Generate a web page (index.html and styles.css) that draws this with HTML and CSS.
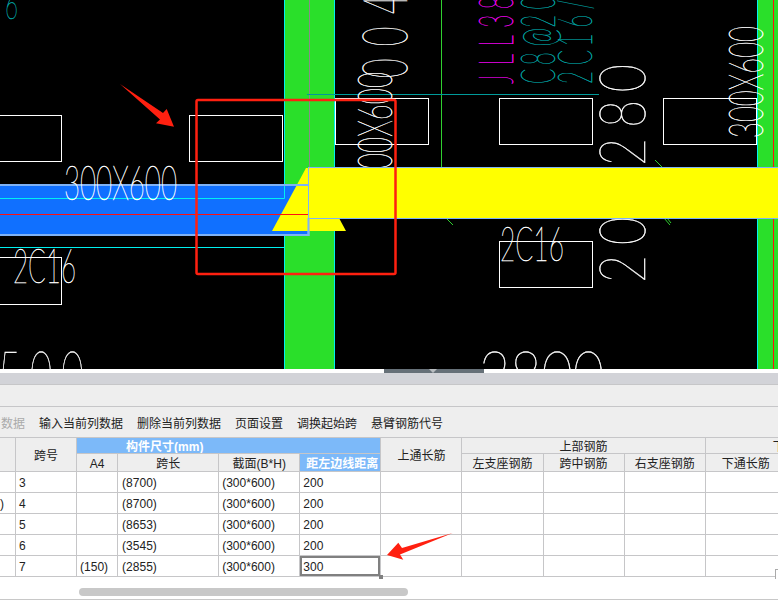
FILE: index.html
```html
<!DOCTYPE html>
<html lang="zh-CN">
<head>
    <meta charset="UTF-8">
    <title>梁平法表格</title>
    <link rel="stylesheet" href="styles.css">
</head>
<body>
    <div class="cad">
        <svg class="cad-svg" width="778" height="369" viewBox="0 0 778 369">
            <!-- columns -->
            <rect class="col" x="284" y="0" width="51" height="369"/>
            <rect class="col" x="757" y="0" width="21" height="369"/>
            <path class="line-cyan" d="M284.5 0V369M334.5 0V369M757.5 0V369"/>
            <path class="line-gray" d="M309.5 0V168"/>
            <path class="line-red" d="M773.5 0V369"/>
            <path class="line-green" d="M441.5 0V168M655 160L662 167M446 218L453 225M664 218L670 225M667 218L671 223"/>

            <!-- rebar boxes -->
            <rect class="box" x="-2" y="115.5" width="63.5" height="46"/>
            <rect class="box" x="189.5" y="115.5" width="93" height="46"/>
            <rect class="box" x="335.5" y="98.5" width="93" height="46"/>
            <rect class="box" x="499.5" y="98.5" width="93" height="46"/>
            <rect class="box" x="663.5" y="98.5" width="93" height="46"/>
            <rect class="box" x="499.5" y="241.5" width="93" height="46"/>
            <rect class="box" x="-2" y="257.5" width="63.5" height="47"/>
            <path class="line-teal" d="M307 94.5H599"/>

            <!-- notes -->
            <text class="cad-text teal" x="5" y="19" font-size="40" textLength="13" lengthAdjust="spacingAndGlyphs">6</text>
            <text class="cad-text" transform="translate(392,185) rotate(-90)" font-size="47" textLength="113" lengthAdjust="spacingAndGlyphs">300X600</text>
            <text class="cad-text" transform="translate(407,78) rotate(-90) scale(.54,1)" font-size="63" x="0 59 118">004</text>
            <text class="cad-text magenta" transform="translate(513,84) rotate(-90) scale(.48,1)" font-size="47" x="0 39 78 117 156">JLL38</text>
            <text class="cad-text teal" transform="translate(555,84) rotate(-90) scale(.48,1)" font-size="47" x="0 39 78 117 156">C8@20</text>
            <text class="cad-text teal" transform="translate(592,84) rotate(-90) scale(.48,1)" font-size="47" x="0 39 78 117 156">2C16/</text>
            <text class="cad-text" transform="translate(645,166) rotate(-90) scale(.76,1)" font-size="64" x="0 50 97">280</text>
            <text class="cad-text" transform="translate(645,283) rotate(-90) scale(.76,1)" font-size="64" x="0 50">20</text>
            <text class="cad-text" transform="translate(763,138) rotate(-90)" font-size="47" textLength="112" lengthAdjust="spacingAndGlyphs">300X600</text>
            <text class="cad-text" x="500" y="261" font-size="47" textLength="64" lengthAdjust="spacingAndGlyphs">2C16</text>
            <text class="cad-text" x="13" y="283" font-size="48" textLength="63" lengthAdjust="spacingAndGlyphs">2C16</text>
            <text class="cad-text" x="479" y="397" font-size="64" textLength="125" lengthAdjust="spacingAndGlyphs">2800</text>
            <text class="cad-text" transform="translate(0,397) scale(.6,1)" font-size="64" x="-3 50 102">500</text>

            <!-- beams -->
            <rect class="beam-blue" x="-2" y="185" width="310.5" height="50"/>
            <path class="line-cyan" d="M0 198.5H284.5V185M0 247.5H284.5"/>
            <text class="cad-text" x="64" y="200" font-size="48" textLength="113" lengthAdjust="spacingAndGlyphs">300X600</text>
            <polygon class="beam-yellow" points="272,231 306,168 309,168 309,231"/>
            <polygon class="beam-yellow" points="309,218 339,218 346,231 309,231"/>
            <path class="line-red" d="M0 214.5H309"/>
            <path class="line-edge" d="M270 185H309M270 235H308.5V218"/>
            <rect class="beam-yellow edge" x="308.5" y="167.5" width="472" height="51"/>

            <!-- markup -->
            <rect class="mark" x="196.5" y="100" width="199" height="174" rx="1.5"/>
            <polygon class="arrow" points="120,84 163,113 166.7,109 174,126.7 156,123.3 160,119.5"/>
        </svg>
    </div>

    <div class="splitter"><div class="splitter-handle"></div></div>
    <div class="band"></div>
    <div class="tools-blank"></div>

    <div class="toolbar">
        <span class="tool tool-off">数据</span>
        <span class="tool">输入当前列数据</span>
        <span class="tool">删除当前列数据</span>
        <span class="tool">页面设置</span>
        <span class="tool">调换起始跨</span>
        <span class="tool">悬臂钢筋代号</span>
    </div>

    <div class="grid-wrap">
        <table class="grid">
            <colgroup>
                <col class="w16"><col class="w61"><col class="w41"><col class="w101">
                <col class="w81"><col class="w81"><col class="w81"><col class="w81">
                <col class="w81"><col class="w81"><col class="w81"><col class="w81">
            </colgroup>
            <thead>
                <tr class="head-top">
                    <th rowspan="2"></th>
                    <th rowspan="2">跨号</th>
                    <th colspan="4" class="group-blue">构件尺寸(mm)</th>
                    <th rowspan="2">上通长筋</th>
                    <th colspan="3">上部钢筋</th>
                    <th colspan="2" class="group-low">下部钢筋</th>
                </tr>
                <tr class="head-sub">
                    <th>A4</th>
                    <th>跨长</th>
                    <th>截面(B*H)</th>
                    <th class="sel-head">距左边线距离</th>
                    <th>左支座钢筋</th>
                    <th>跨中钢筋</th>
                    <th>右支座钢筋</th>
                    <th>下通长筋</th>
                    <th></th>
                </tr>
            </thead>
            <tbody>
                <tr><td></td><td>3</td><td></td><td>(8700)</td><td>(300*600)</td><td>200</td><td></td><td></td><td></td><td></td><td></td><td></td></tr>
                <tr><td class="cut">)</td><td>4</td><td></td><td>(8700)</td><td>(300*600)</td><td>200</td><td></td><td></td><td></td><td></td><td></td><td></td></tr>
                <tr><td></td><td>5</td><td></td><td>(8653)</td><td>(300*600)</td><td>200</td><td></td><td></td><td></td><td></td><td></td><td></td></tr>
                <tr><td></td><td>6</td><td></td><td>(3545)</td><td>(300*600)</td><td>200</td><td></td><td></td><td></td><td></td><td></td><td></td></tr>
                <tr><td></td><td>7</td><td>(150)</td><td>(2855)</td><td>(300*600)</td><td class="sel-cell">300</td><td></td><td></td><td></td><td></td><td></td><td></td></tr>
            </tbody>
        </table>
        <div class="corner-box"></div>
        <svg class="arrow-layer" width="80" height="40" viewBox="380 528 80 40">
            <polygon class="arrow" points="452.7,533 402,548 398.3,542.7 387,555 403.3,559.7 400,554.5"/>
        </svg>
    </div>

    <div class="hscroll"><div class="hscroll-thumb"></div></div>
</body>
</html>
```

FILE: styles.css
```css
html, body {
    margin: 0;
    padding: 0;
}

body {
    width: 778px;
    height: 601px;
    overflow: hidden;
    background: #fff;
    color: #222;
    font-family: "Liberation Sans", "Noto Sans CJK SC", sans-serif;
    font-size: 12px;
    display: flex;
    flex-direction: column;
}

/* drawing */
.cad {
    height: 369px;
    flex: none;
    background: #000;
}

.cad-svg {
    display: block;
}

.col { fill: #2adf2a; }
.line-cyan { fill: none; stroke: #00f0f0; stroke-width: 1; }
.line-gray { fill: none; stroke: #8a8a8a; stroke-width: 1; }
.line-red { fill: none; stroke: #ff1010; stroke-width: 1; }
.line-green { fill: none; stroke: #2fd02f; stroke-width: 1; }
.line-teal { fill: none; stroke: #009a9a; stroke-width: 1; }
.line-edge { fill: none; stroke: #7fb2f5; stroke-width: 2; }
.box { fill: none; stroke: #fff; stroke-width: 1; }

.cad-text {
    font-family: "Lato", "DejaVu Sans", sans-serif;
    font-weight: 100;
    fill: #fff;
    stroke: #fff;
    stroke-width: 0.5;
}

.cad-text.teal { fill: #00a0a0; stroke: #00a0a0; }
.cad-text.magenta { fill: #f000f0; stroke: #f000f0; }

.beam-blue { fill: #1070ff; stroke: #7fb2f5; stroke-width: 2; }
.beam-yellow { fill: #ffff00; }
.beam-yellow.edge { stroke: #7fb2f5; stroke-width: 1; }
.mark { fill: none; stroke: #ff2010; stroke-width: 2.5; }
.arrow { fill: #ff2010; }

/* splitter and empty bars */
.splitter {
    height: 4px;
    flex: none;
    background: #fff;
}

.splitter-handle {
    width: 100px;
    height: 4px;
    margin-left: 384px;
    background: #667078;
    position: relative;
}

.splitter-handle::after {
    content: "";
    position: absolute;
    left: 45px;
    top: 0;
    border-left: 4px solid transparent;
    border-right: 4px solid transparent;
    border-top: 4px solid #b8bcc0;
}

.band {
    height: 12px;
    flex: none;
    background: #d2d3d8;
    border-bottom: 1px solid #c6c6c8;
    box-sizing: border-box;
}

.tools-blank {
    height: 22px;
    flex: none;
    background: #eee;
    border-bottom: 1px solid #c6c6c8;
    box-sizing: border-box;
}

.toolbar {
    height: 31px;
    flex: none;
    box-sizing: border-box;
    padding-left: 1px;
    background: #eee;
    border-bottom: 1px solid #c6c6c8;
    display: flex;
    align-items: center;
    gap: 14px;
    white-space: nowrap;
}

.tool-off {
    color: #aaa;
}

/* table */
.grid-wrap {
    height: 141px;
    flex: none;
    overflow: hidden;
    position: relative;
}

.grid {
    border-collapse: separate;
    border-spacing: 0;
    table-layout: fixed;
    width: 868px;
}

.w16 { width: 16px; }
.w61 { width: 61px; }
.w41 { width: 41px; }
.w101 { width: 101px; }
.w81 { width: 81px; }

.grid th,
.grid td {
    box-sizing: border-box;
    padding: 2px 0 0;
    border-right: 1px solid #c6c6c8;
    border-bottom: 1px solid #c6c6c8;
    overflow: hidden;
    white-space: nowrap;
    line-height: 13px;
}

.grid th {
    background: #eee;
    font-weight: normal;
    text-align: center;
}

.head-top th {
    height: 16px;
    padding-top: 3px;
    line-height: 12px;
}

.head-top th[rowspan] {
    padding-top: 4px;
    line-height: 13px;
}

.head-sub th {
    height: 18px;
    padding-top: 3px;
}

.grid .group-blue {
    background: #7cb9f9;
    color: #fff;
    font-weight: bold;
    text-align: left;
    padding-left: 49px;
}

.grid .group-low {
    text-align: left;
    padding-left: 67px;
}

.grid .sel-head {
    background: #7cb9f9;
    color: #fff;
    font-weight: bold;
    text-align: left;
    padding-left: 6px;
}

.grid td {
    height: 21px;
    padding-left: 3px;
}

.grid td:nth-child(4) { padding-left: 4px; }
.grid td.cut { padding-left: 0; }

.grid td.sel-cell {
    overflow: visible;
    position: relative;
    box-shadow: inset 0 0 0 2px #808080;
}

.sel-cell::after {
    content: "";
    position: absolute;
    right: -3px;
    bottom: -3px;
    width: 4px;
    height: 4px;
    background: #808080;
}

.corner-box {
    position: absolute;
    left: 775px;
    top: 131px;
    width: 10px;
    height: 16px;
    border: 1px solid #aaa;
    background: #fff;
}

.arrow-layer {
    position: absolute;
    left: 380px;
    top: 90px;
}

/* bottom scrollbar */
.hscroll {
    height: 21px;
    flex: none;
    box-sizing: border-box;
    background: #fff;
    padding-top: 9px;
    padding-left: 79px;
    border-bottom: 1px solid #c8c8c8;
}

.hscroll-thumb {
    width: 329px;
    height: 8px;
    border-radius: 4px;
    background: #c8c8c8;
}
```
